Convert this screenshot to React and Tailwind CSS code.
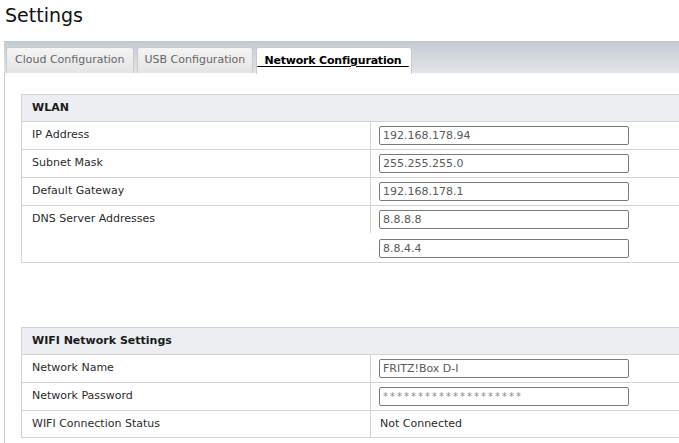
import React from 'react';

const font = "font-['DejaVu_Sans','Verdana',sans-serif]";

function Field({ value }) {
    return (
        <div className="w-[250px] h-[19px] border border-[#7a7a7a] rounded-[2px] px-[3px] flex items-center text-[#5a5a5a] leading-none">
            {value}
        </div>
    );
}

function Row({ label, children, tall, last }) {
    const h = tall ? 'h-[57px]' : last ? 'h-[27px]' : 'h-[28px]';
    return (
        <div className={`flex border-b border-[#d3d3d3] ${h}`}>
            <div className="w-[349px] shrink-0 border-r border-[#d3d3d3] pl-[10px] h-[27px] flex items-center text-[#2b2b2b]">
                {label}
            </div>
            <div className={`pl-[8px] flex ${tall ? 'flex-col gap-[10px] pt-[4px]' : 'items-center'}`}>
                {children}
            </div>
        </div>
    );
}

function Section({ title, children }) {
    return (
        <div className="w-[720px] border-l border-t border-[#d3d3d3]">
            <div className="h-[27px] bg-[#eceef1] border-b border-[#d3d3d3] pl-[10px] flex items-center font-bold text-[#1a1a1a]">
                {title}
            </div>
            {children}
        </div>
    );
}

export default function App() {
    return (
        <div className={`${font} text-[11px] w-[679px] h-[443px] overflow-hidden bg-white`}>
            <h1 className="text-[19px] leading-[24px] pt-[3px] pl-[5px] text-[#111]">Settings</h1>

            <div className="ml-[4px] mt-[14px]">
                {/* Tab bar */}
                <div className="h-[32px] border-t border-[#c2c6ca] bg-gradient-to-b from-[#c4ccd3] to-[#e2e5e8] flex items-end pl-[2px] gap-[3px]">
                    <div className="h-[26px] px-[8px] flex items-center rounded-t-[3px] border border-b-0 border-[#c9c9c9] bg-gradient-to-b from-[#f5f5f5] to-[#e4e4e4] text-[#666]">
                        Cloud Configuration
                    </div>
                    <div className="h-[26px] px-[7px] flex items-center rounded-t-[3px] border border-b-0 border-[#c9c9c9] bg-gradient-to-b from-[#f5f5f5] to-[#e4e4e4] text-[#666]">
                        USB Configuration
                    </div>
                    <div className="h-[27px] -mb-px pr-[2px] flex items-center rounded-t-[3px] border border-b-0 border-[#c9c9c9] bg-white font-bold text-black">
                        <span className="underline underline-offset-[2px] tracking-[-0.2px]">{'\u00a0\u00a0Network Configuration\u00a0\u00a0'}</span>
                    </div>
                </div>

                {/* Panel */}
                <div className="border-l border-[#cfcfcf] pl-[16px] pt-[21px] h-[400px]">
                    <Section title="WLAN">
                        <Row label="IP Address"><Field value="192.168.178.94" /></Row>
                        <Row label="Subnet Mask"><Field value="255.255.255.0" /></Row>
                        <Row label="Default Gateway"><Field value="192.168.178.1" /></Row>
                        <Row label="DNS Server Addresses" tall>
                            <Field value="8.8.8.8" />
                            <Field value="8.8.4.4" />
                        </Row>
                    </Section>

                    <div className="h-[64px]" />

                    <Section title="WIFI Network Settings">
                        <Row label="Network Name"><Field value="FRITZ!Box D-I" /></Row>
                        <Row label="Network Password">
                            <Field value={<span className="text-[10px] tracking-[2px] text-[#8a8a8a]">********************</span>} />
                        </Row>
                        <Row label="WIFI Connection Status" last>
                            <span className="text-[#2b2b2b] pl-px">Not Connected</span>
                        </Row>
                    </Section>
                </div>
            </div>
        </div>
    );
}
